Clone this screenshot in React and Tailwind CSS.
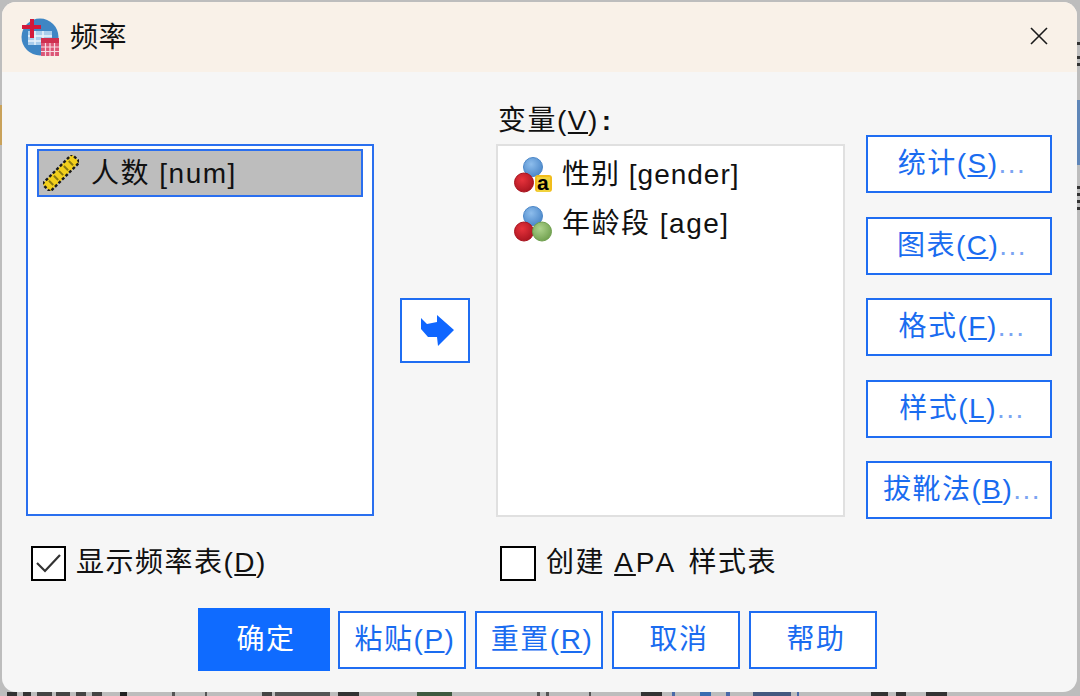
import React from 'react';

const FONT = '[font-family:"Liberation_Sans","Noto_Sans_CJK_SC",sans-serif]';

// what shows of the desktop around the dialog
const BOTTOM_MARKS = [
    [7, 0], [10, '#333'], [6, 0], [8, '#333'], [6, 0], [15, '#444'], [4, 0], [14, '#444'], [6, 0], [10, '#444'], [6, 0], [10, '#444'], [18, 0], [7, '#222'],
    [45, 0], [3, '#555'], [30, 0], [2, '#555'], [55, 0], [10, '#444'], [3, 0], [55, '#555'], [8, 0], [21, '#333'], [58, 0], [35, '#3f5a40'],
    [85, 0], [3, '#555'], [6, 0], [3, '#555'], [40, 0], [2, '#555'], [50, 0], [21, '#333'], [10, 0], [3, '#4a6aa8'], [25, 0], [11, '#3a6cb0'], [15, 0], [4, '#4a6aa8'],
    [23, 0], [38, '#44587f'], [6, 0], [2, '#4a6aa8'], [72, 0], [17, '#333'], [8, 0], [10, '#333'], [20, 0], [21, '#333'],
];
const RIGHT_MARKS = [
    [40, 0], [3, '#333'], [11, 0], [3, '#333'], [4, 0], [3, '#333'], [34, '#bdbdbd'], [65, '#5f86b8'], [21, 0], [3, '#333'], [4, 0], [3, '#333'], [4, 0], [3, '#333'], [4, 0], [3, '#333'],
];

const AppIcon = () => (
    <svg width="40" height="40" viewBox="0 0 40 40">
        <circle cx="20" cy="20" r="18.500" fill="#3f86c4" />
        <path d="M8 14h24v14H8z" fill="#a9cdec" />
        <path d="M8 19h24M8 24h24M15 14v14M23 14v14" stroke="#eaf3fb" strokeWidth="1.500" />
        <path d="M10 2h4v6h7v4h-7v9h-4v-9H2V8h8z" fill="#d3193a" />
        <rect x="21" y="21" width="18" height="18" fill="#e9edf3" />
        <rect x="21" y="21" width="18" height="5" fill="#cf2f4f" />
        <path d="M21 26h18v13H21z" fill="#dc5676" />
        <path d="M21 30h18M21 34.500h18M25.500 26v13M30 26v13M34.500 26v13" stroke="#f7dbe2" strokeWidth="1.200" />
    </svg>
);

const RulerIcon = () => (
    <svg width="36" height="36" viewBox="0 0 36 36">
        <g transform="rotate(-45 18 18)">
            <rect x="-3" y="12.500" width="42" height="11" fill="#f2cf1c" stroke="#1b1b1b" strokeWidth="2.400" strokeDasharray="3 2" />
            <path d="M4 15v6M11 15v6M18 15v6M25 15v6M32 15v6" stroke="#8a7a12" strokeWidth="2" />
        </g>
    </svg>
);

const Ball = ({ cx, cy, id, light, dark }) => (
    <>
        <radialGradient id={id} cx="0.4" cy="0.35" r="0.7">
            <stop offset="0" stopColor={light} />
            <stop offset="1" stopColor={dark} />
        </radialGradient>
        <circle cx={cx} cy={cy} r="9.500" fill={`url(#${id})`} stroke={dark} strokeWidth="1" />
    </>
);

const GenderIcon = () => (
    <svg width="38" height="36" viewBox="0 0 38 36">
        <Ball id="g1" cx={19} cy={10} light="#8dbdec" dark="#4a86c8" />
        <Ball id="g2" cx={10} cy={25.500} light="#e8333c" dark="#a8141f" />
        <rect x="21" y="18" width="17" height="17" rx="3" fill="#f1bd1c" />
        <rect x="23" y="20" width="13" height="15" fill="#f1d23c" />
        <text x="29.500" y="33" textAnchor="middle" fontSize="21" fontWeight="700" fill="#000" fontFamily="Liberation Sans">a</text>
    </svg>
);

const AgeIcon = () => (
    <svg width="38" height="36" viewBox="0 0 38 36">
        <Ball id="a1" cx={19} cy={10} light="#8dbdec" dark="#4a86c8" />
        <Ball id="a2" cx={10} cy={25.500} light="#e8333c" dark="#a8141f" />
        <Ball id="a3" cx={28} cy={25.500} light="#aed38c" dark="#6f9f4e" />
    </svg>
);

const Btn = ({ label, mn, dots, className = '' }) => (
    <button className={`flex items-center justify-center border-2 border-[#1f6df2] bg-white pl-[6px] text-[28px] tracking-[1.500px] text-[#1a6cf0] ${className}`}>
        {label}
        {mn && <span>(<u className="underline-offset-2">{mn}</u>)</span>}
        {dots && <span className="text-[#7ba4f2]">...</span>}
    </button>
);

const App = () => {
    return (
        <div className={`flex h-[696px] w-[1080px] flex-col overflow-hidden bg-[#bdbdbd] pt-[2px] ${FONT}`}>
            <div className="flex">
                <div className="flex w-[2px] flex-col">
                    <div className="mt-[103px] h-[40px] bg-[#c9a25a]" />
                </div>
                <div className="h-[690px] w-[1075px] overflow-hidden rounded-[14px] bg-[#f6f6f6] text-[#111]">
                    {/* Title bar */}
                    <div className="flex h-[70px] items-center bg-[#f9f1e8] pr-[28px] pl-[18px]">
                        <AppIcon />
                        <span className="ml-[10px] pt-[2px] text-[28px] tracking-[0.500px]">频率</span>
                        <svg className="ml-auto mb-[3px]" width="20" height="20" viewBox="0 0 20 20">
                            <path d="M2 2l16 16M18 2L2 18" stroke="#1a1a1a" strokeWidth="1.600" />
                        </svg>
                    </div>

                    <div className="flex pl-[24px]">
                        {/* Source list */}
                        <div className="mt-[72px] h-[372px] w-[348px] border-2 border-[#2a6fef] bg-white px-[9px] pt-[3px]">
                            <div className="flex h-[48px] items-center border-2 border-[#2a6fef] bg-[#bdbdbd] pl-[4px] text-[28px] tracking-[1.500px]">
                                <RulerIcon />
                                <span className="ml-[12px] pt-[2px]">人数 [num]</span>
                            </div>
                        </div>

                        {/* Arrow */}
                        <div className="ml-[26px] mt-[226px]">
                            <button className="flex h-[65px] w-[70px] items-center justify-center border-2 border-[#1f6df2] bg-white pl-[6px]">
                                <svg width="34" height="32" viewBox="0 0 34 32">
                                    <path d="M0 3L6 9L16 7V0L33 15L17 31L16 22H7L0 14Z" fill="#0f66ff" />
                                </svg>
                            </button>
                        </div>

                        {/* Target list */}
                        <div className="ml-[26px] flex flex-col">
                            <div className="mt-[26px] flex h-[46px] items-center pl-[2px] text-[28px] tracking-[1.500px]">
                                变量(<u className="underline-offset-2">V</u>)<span className="ml-[3px] font-bold">:</span>
                            </div>
                            <div className="h-[373px] w-[349px] border-2 border-[#e0e0e0] bg-white pt-[4px] pl-[16px] text-[28px] tracking-[1.500px]">
                                <div className="flex h-[49px] items-center">
                                    <GenderIcon />
                                    <span className="ml-[10px] tracking-[1px]">性别 [gender]</span>
                                </div>
                                <div className="flex h-[49px] items-center">
                                    <AgeIcon />
                                    <span className="ml-[10px]">年龄段 [age]</span>
                                </div>
                            </div>
                        </div>

                        {/* Side buttons */}
                        <div className="ml-[21px] mt-[63px] flex flex-col gap-[23.500px]">
                            <Btn className="h-[58px] w-[186px]" label="统计" mn="S" dots />
                            <Btn className="h-[58px] w-[186px]" label="图表" mn="C" dots />
                            <Btn className="h-[58px] w-[186px]" label="格式" mn="F" dots />
                            <Btn className="h-[58px] w-[186px]" label="样式" mn="L" dots />
                            <Btn className="h-[58px] w-[186px]" label="拔靴法" mn="B" dots />
                        </div>
                    </div>

                    {/* Checkboxes */}
                    <div className="mt-[26px] flex h-[36px] items-center pl-[29px] text-[28px] tracking-[1.500px]">
                        <div className="flex h-[35px] w-[35px] items-center justify-center border-2 border-black bg-white">
                            <svg width="27" height="22" viewBox="0 0 27 22">
                                <path d="M2 11l8 8L25 3" fill="none" stroke="#333" strokeWidth="2.200" />
                            </svg>
                        </div>
                        <span className="ml-[10px]">显示频率表(<u className="underline-offset-2">D</u>)</span>
                        <div className="ml-[233px] h-[35px] w-[36px] border-2 border-black bg-white" />
                        <span className="ml-[10px] whitespace-pre">创建 <span className="tracking-[3px]"><u className="underline-offset-2">A</u>PA</span> <span className="ml-[2px]">样式表</span></span>
                    </div>

                    {/* Bottom buttons */}
                    <div className="mt-[27px] flex items-center pl-[196px]">
                        <button className="h-[63px] w-[132px] bg-[#0f6bff] pl-[4px] text-[28px] tracking-[1.500px] text-white">确定</button>
                        <Btn className="ml-[8px] h-[58px] w-[128px]" label="粘贴" mn="P" />
                        <Btn className="ml-[9px] h-[58px] w-[128px]" label="重置" mn="R" />
                        <Btn className="ml-[9px] h-[58px] w-[128px]" label="取消" />
                        <Btn className="ml-[9px] h-[58px] w-[128px]" label="帮助" />
                    </div>
                </div>
                <div className="flex w-[3px] flex-col">
                    {RIGHT_MARKS.map(([h, c], i) => (
                        <div key={i} style={{ height: h, background: c || 'transparent' }} />
                    ))}
                </div>
            </div>
            <div className="flex h-[4px]">
                {BOTTOM_MARKS.map(([w, c], i) => (
                    <div key={i} style={{ width: w, background: c || 'transparent' }} />
                ))}
            </div>
        </div>
    );
};

export default App;
